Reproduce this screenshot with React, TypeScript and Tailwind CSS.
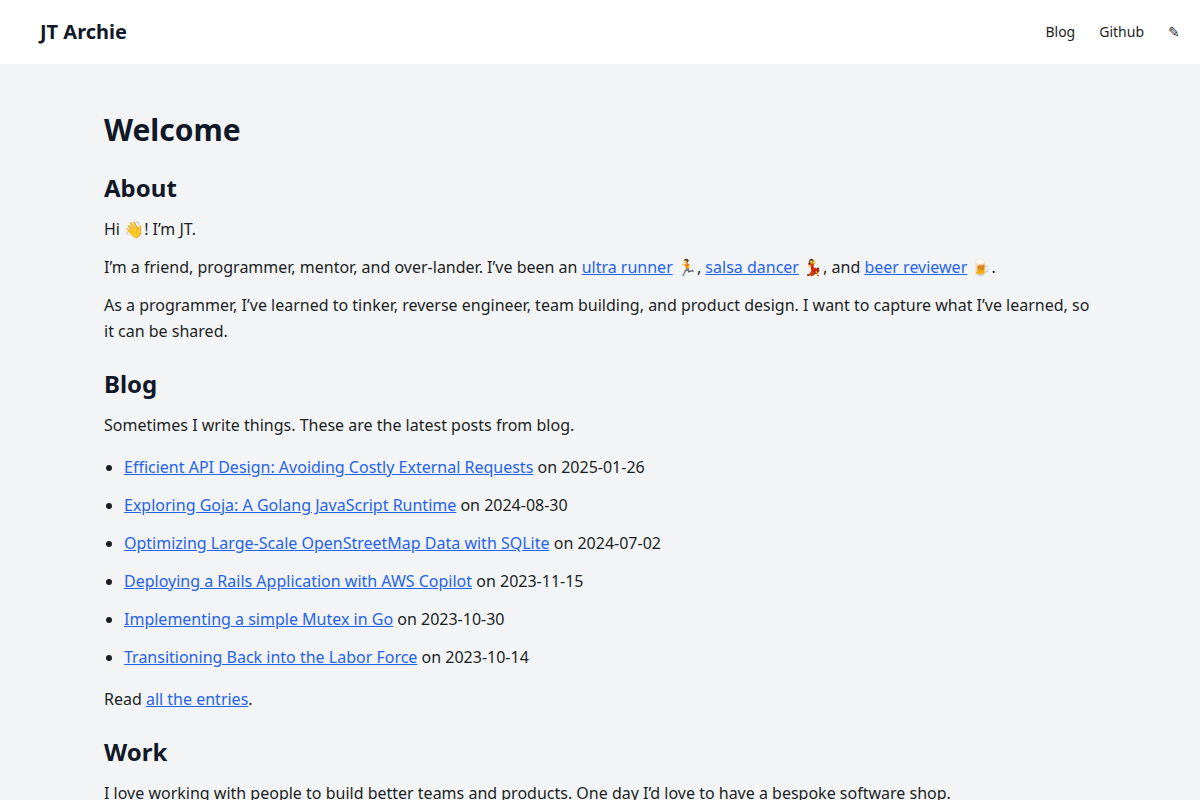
import React from 'react';

interface Post {
  title: string;
  date: string;
}

const POSTS: Post[] = [
  { title: 'Efficient API Design: Avoiding Costly External Requests', date: '2025-01-26' },
  { title: 'Exploring Goja: A Golang JavaScript Runtime', date: '2024-08-30' },
  { title: 'Optimizing Large-Scale OpenStreetMap Data with SQLite', date: '2024-07-02' },
  { title: 'Deploying a Rails Application with AWS Copilot', date: '2023-11-15' },
  { title: 'Implementing a simple Mutex in Go', date: '2023-10-30' },
  { title: 'Transitioning Back into the Labor Force', date: '2023-10-14' },
];

function TextLink({ children }: { children: React.ReactNode }) {
  return (
    <a href="#" className="text-[#2563eb] underline">
      {children}
    </a>
  );
}

function SectionTitle({ children }: { children: React.ReactNode }) {
  return <h2 className="mt-6 mb-3 text-2xl font-bold text-[#111827]">{children}</h2>;
}

function Header() {
  return (
    <header className="flex h-16 items-center justify-between bg-white pr-5 pl-10">
      <a href="#" className="text-xl font-bold text-[#111827]">JT Archie</a>
      <nav className="flex items-center gap-6 text-sm">
        <a href="#">Blog</a>
        <a href="#">Github</a>
        <a href="#" aria-label="Edit">✎</a>
      </nav>
    </header>
  );
}

function App() {
  return (
    <div className="min-h-screen bg-[#f3f4f6] font-['Noto_Sans',sans-serif] text-[#1b1f24]">
      <Header />

      <main className="mx-auto max-w-5xl px-4 pt-12 pb-12 leading-[26px]">
        <h1 className="text-3xl font-bold text-[#111827]">Welcome</h1>

        <SectionTitle>About</SectionTitle>
        <div className="space-y-3">
          <p>Hi 👋! I’m JT.</p>
          <p>
            I’m a friend, programmer, mentor, and over-lander. I’ve been an{' '}
            <TextLink>ultra runner</TextLink> 🏃, <TextLink>salsa dancer</TextLink> 💃, and{' '}
            <TextLink>beer reviewer</TextLink> 🍺.
          </p>
          <p>
            As a programmer, I’ve learned to tinker, reverse engineer, team building, and product
            design. I want to capture what I’ve learned, so it can be shared.
          </p>
        </div>

        <SectionTitle>Blog</SectionTitle>
        <p>Sometimes I write things. These are the latest posts from blog.</p>
        <ul className="my-4 list-disc space-y-3 pl-5">
          {POSTS.map((post) => (
            <li key={post.title}>
              <TextLink>{post.title}</TextLink> on {post.date}
            </li>
          ))}
        </ul>
        <p>
          Read <TextLink>all the entries</TextLink>.
        </p>

        <SectionTitle>Work</SectionTitle>
        <p>
          I love working with people to build better teams and products. One day I’d love to have a
          bespoke software shop.
        </p>
      </main>
    </div>
  );
}

export default App;
